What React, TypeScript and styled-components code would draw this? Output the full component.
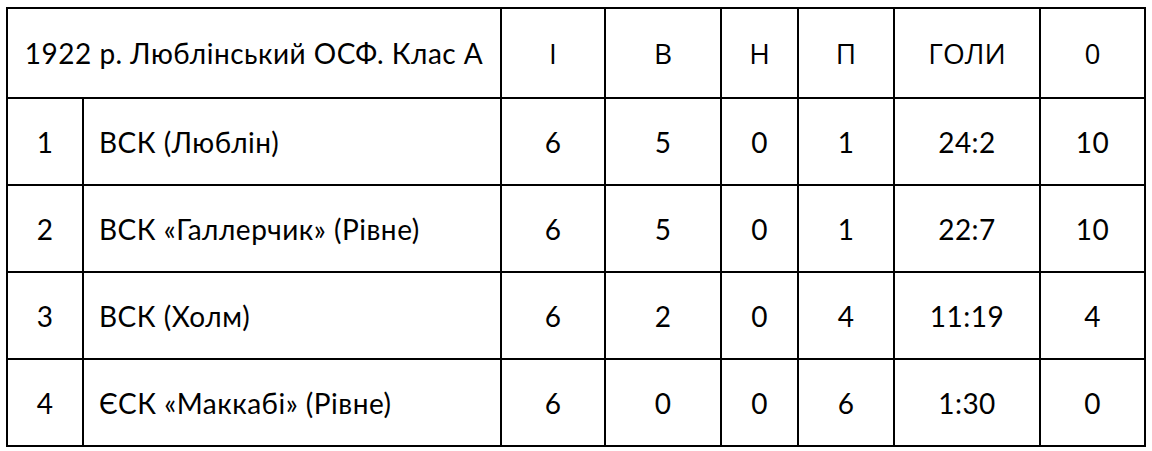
import React from "react";
import styled, { createGlobalStyle } from "styled-components";

const GlobalStyle = createGlobalStyle`
    html, body {
        margin: 0;
        background: #fff;
    }
`

const Page = styled.div`
    padding: 7px 0 0 6px;
`

const Table = styled.table`
    border-collapse: collapse;
    table-layout: fixed;
    width: 1138px;
    font-family: Lato, "Liberation Sans", sans-serif;
    font-size: 28px;
    letter-spacing: 0.5px;
    color: #000;
`

const HeadRow = styled.tr`
    height: 90px;
`

const BodyRow = styled.tr`
    height: 87px;
`

const Cell = styled.td<{ $left?: boolean; $alt?: boolean }>`
    border: 2px solid #000;
    padding: 0 0 0 ${(p) => (p.$left ? "15px" : "0")};
    text-align: ${(p) => (p.$left ? "left" : "center")};
    vertical-align: middle;
    white-space: nowrap;
    font-family: ${(p) => (p.$alt ? '"Open Sans", sans-serif' : "inherit")};
    letter-spacing: ${(p) => (p.$alt ? "0" : "inherit")};
`

type Team = {
    pos: number;
    name: string;
    games: number;
    won: number;
    drawn: number;
    lost: number;
    goals: string;
    points: number;
};

const teams: Team[] = [
    { pos: 1, name: "ВСК (Люблін)", games: 6, won: 5, drawn: 0, lost: 1, goals: "24:2", points: 10 },
    { pos: 2, name: "ВСК «Галлерчик» (Рівне)", games: 6, won: 5, drawn: 0, lost: 1, goals: "22:7", points: 10 },
    { pos: 3, name: "ВСК (Холм)", games: 6, won: 2, drawn: 0, lost: 4, goals: "11:19", points: 4 },
    { pos: 4, name: "ЄСК «Маккабі» (Рівне)", games: 6, won: 0, drawn: 0, lost: 6, goals: "1:30", points: 0 },
];

const widths = [76, 418, 104, 116, 77, 96, 146, 105];

const App: React.FC = () => {
    return (
        <Page>
            <GlobalStyle />
            <Table>
                <colgroup>
                    {widths.map((w, i) => (
                        <col key={i} style={{ width: w }} />
                    ))}
                </colgroup>
                <thead>
                    <HeadRow>
                        <Cell colSpan={2}>1922 р. Люблінський ОСФ. Клас А</Cell>
                        <Cell $alt>І</Cell>
                        <Cell $alt>В</Cell>
                        <Cell $alt>Н</Cell>
                        <Cell $alt>П</Cell>
                        <Cell $alt>ГОЛИ</Cell>
                        <Cell $alt>0</Cell>
                    </HeadRow>
                </thead>
                <tbody>
                    {teams.map((t) => (
                        <BodyRow key={t.pos}>
                            <Cell>{t.pos}</Cell>
                            <Cell $left>{t.name}</Cell>
                            <Cell>{t.games}</Cell>
                            <Cell>{t.won}</Cell>
                            <Cell>{t.drawn}</Cell>
                            <Cell>{t.lost}</Cell>
                            <Cell>{t.goals}</Cell>
                            <Cell>{t.points}</Cell>
                        </BodyRow>
                    ))}
                </tbody>
            </Table>
        </Page>
    )
}

export default App
